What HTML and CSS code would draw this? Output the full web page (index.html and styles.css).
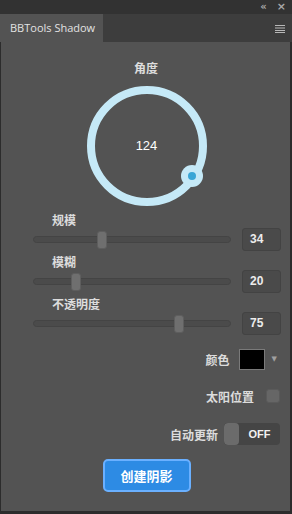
FILE: index.html
```html
<!DOCTYPE html>
<html lang="zh-CN">
<head>
    <meta charset="UTF-8">
    <meta name="viewport" content="width=device-width, initial-scale=1.0">
    <title>BBTools Shadow</title>
    <link rel="stylesheet" href="styles.css">
</head>
<body>
    <div class="window">
        <div class="titlebar">
            <span class="title-icon">&#171;</span>
            <span class="title-icon close">&#215;</span>
        </div>

        <div class="tabbar">
            <div class="tab">BBTools Shadow</div>
            <svg class="menu-icon" width="10" height="8" viewBox="0 0 10 8">
                <rect x="0" y="0" width="10" height="1" fill="#b8b8b8"/>
                <rect x="0" y="2.5" width="10" height="1" fill="#b8b8b8"/>
                <rect x="0" y="5" width="10" height="1" fill="#b8b8b8"/>
                <rect x="0" y="7" width="10" height="1" fill="#b8b8b8"/>
            </svg>
        </div>

        <div class="panel">
            <div class="dial-label">角度</div>
            <div class="dial">
                <svg width="128" height="128" viewBox="0 0 128 128">
                    <circle cx="64" cy="64" r="56" fill="none" stroke="#c5e9f7" stroke-width="8"/>
                    <circle cx="109" cy="94" r="11" fill="#c5e9f7"/>
                    <circle cx="109" cy="94" r="4" fill="#3aa6d6"/>
                </svg>
                <span class="dial-value">124</span>
            </div>

            <div class="sliders">
                <div class="slider-group">
                    <div class="slider-label">规模</div>
                    <div class="slider-row">
                        <input type="range" min="0" max="100" value="34" class="slider">
                        <div class="num-box">34</div>
                    </div>
                </div>
                <div class="slider-group">
                    <div class="slider-label">模糊</div>
                    <div class="slider-row">
                        <input type="range" min="0" max="100" value="20" class="slider">
                        <div class="num-box">20</div>
                    </div>
                </div>
                <div class="slider-group">
                    <div class="slider-label">不透明度</div>
                    <div class="slider-row">
                        <input type="range" min="0" max="100" value="75" class="slider">
                        <div class="num-box">75</div>
                    </div>
                </div>
            </div>

            <div class="options">
                <div class="option-row color-row">
                    <span class="option-label">颜色</span>
                    <span class="swatch"></span>
                    <span class="arrow">&#9660;</span>
                </div>
                <div class="option-row sun-row">
                    <span class="option-label">太阳位置</span>
                    <span class="checkbox"></span>
                </div>
                <div class="option-row auto-row">
                    <span class="option-label">自动更新</span>
                    <span class="toggle">
                        <span class="toggle-knob"></span>
                        <span class="toggle-text">OFF</span>
                    </span>
                </div>
            </div>

            <div class="actions">
                <button class="create-btn">创建阴影</button>
            </div>
        </div>
    </div>
</body>
</html>
```

FILE: styles.css
```css
body {
    margin: 0;
    background: #2c2c2c;
    font-family: "Noto Sans CJK SC", "Liberation Sans", sans-serif;
}

.window {
    width: 292px;
    height: 514px;
    display: flex;
    flex-direction: column;
}

.titlebar {
    height: 14px;
    background: #323232;
    display: flex;
    justify-content: flex-end;
    align-items: center;
    gap: 10px;
    padding-right: 6px;
}

.title-icon {
    color: #a8a8a8;
    font-family: "DejaVu Sans", sans-serif;
    font-size: 10px;
    line-height: 14px;
    font-weight: bold;
}

.title-icon.close {
    font-size: 11px;
}

.tabbar {
    height: 28px;
    background: #3d3d3d;
    display: flex;
    align-items: stretch;
    justify-content: space-between;
}

.tab {
    width: 103px;
    background: #535353;
    color: #e2e2e2;
    font-family: "Open Sans", "Liberation Sans", sans-serif;
    font-size: 11px;
    line-height: 28px;
    padding-left: 10px;
    box-sizing: border-box;
}

.menu-icon {
    align-self: center;
    margin-right: 7px;
    margin-top: 1px;
}

.panel {
    flex: 1;
    background: #535353;
    margin: 0 2px 3px 1px;
    display: flex;
    flex-direction: column;
    color: #dcdcdc;
}

.dial-label {
    text-align: center;
    font-size: 12px;
    font-weight: bold;
    line-height: 17px;
    margin-top: 17px;
    padding-left: 1px;
}

.dial {
    position: relative;
    width: 128px;
    height: 128px;
    margin: 6px auto 0 auto;
    padding-left: 2px;
}

.dial svg {
    display: block;
}

.dial-value {
    position: absolute;
    left: 2px;
    right: 0;
    top: 55px;
    text-align: center;
    color: #ffffff;
    font-family: "Liberation Sans", sans-serif;
    font-size: 13px;
    line-height: 18px;
}

.sliders {
    display: flex;
    flex-direction: column;
    gap: 2px;
    margin-top: 1px;
}

.slider-label {
    font-size: 12px;
    font-weight: bold;
    line-height: 17px;
    padding-left: 51px;
}

.slider-row {
    display: flex;
    align-items: center;
    height: 23px;
    padding-left: 32px;
    gap: 11px;
}

.slider {
    -webkit-appearance: none;
    appearance: none;
    margin: 0;
    width: 198px;
    height: 7px;
    border-radius: 4px;
    background: #4b4b4b;
    border: 1px solid #444444;
    box-sizing: border-box;
    outline: none;
}

.slider::-webkit-slider-thumb {
    -webkit-appearance: none;
    appearance: none;
    width: 10px;
    height: 18px;
    border-radius: 3px;
    background: #6f6f6f;
    border: 1px solid #5e5e5e;
    box-sizing: border-box;
}

.num-box {
    width: 39px;
    height: 23px;
    box-sizing: border-box;
    background: #4a4a4a;
    border: 1px solid #434343;
    border-radius: 3px;
    color: #ececec;
    font-family: "Liberation Sans", sans-serif;
    font-size: 12px;
    font-weight: bold;
    line-height: 21px;
    padding-left: 7px;
}

.options {
    display: flex;
    flex-direction: column;
    align-items: flex-end;
    margin-top: 13px;
    padding-right: 10px;
}

.option-row {
    display: flex;
    align-items: center;
    font-size: 12px;
    font-weight: bold;
}

.color-row {
    height: 22px;
}

.swatch {
    width: 26px;
    height: 21px;
    box-sizing: border-box;
    background: #000000;
    border: 1px solid #7a7a7a;
    margin-left: 9px;
}

.arrow {
    font-family: "DejaVu Sans", sans-serif;
    font-size: 7px;
    color: #a0a0a0;
    margin-left: 7px;
    margin-right: 3px;
}

.sun-row {
    height: 16px;
    margin-top: 18px;
}

.checkbox {
    width: 14px;
    height: 14px;
    box-sizing: border-box;
    background: #666666;
    border: 1px solid #5a5a5a;
    border-radius: 3px;
    margin-left: 12px;
}

.auto-row {
    margin-top: 19px;
    height: 22px;
}

.toggle {
    display: flex;
    width: 56px;
    height: 22px;
    margin-left: 6px;
    border-radius: 4px;
    overflow: hidden;
    background: #454545;
}

.toggle-knob {
    width: 15px;
    background: #6b6b6b;
    border-radius: 4px;
}

.toggle-text {
    flex: 1;
    text-align: center;
    color: #f2f2f2;
    font-family: "Liberation Sans", sans-serif;
    font-size: 11px;
    line-height: 22px;
}

.actions {
    display: flex;
    justify-content: center;
    margin-top: 14px;
    padding-left: 2px;
}

.create-btn {
    width: 88px;
    height: 33px;
    background: #2d8be4;
    border: 2px solid #6ab0ff;
    border-radius: 5px;
    color: #ffffff;
    font-family: "Noto Sans CJK SC", sans-serif;
    font-size: 13px;
    font-weight: bold;
    padding: 0;
}
```
